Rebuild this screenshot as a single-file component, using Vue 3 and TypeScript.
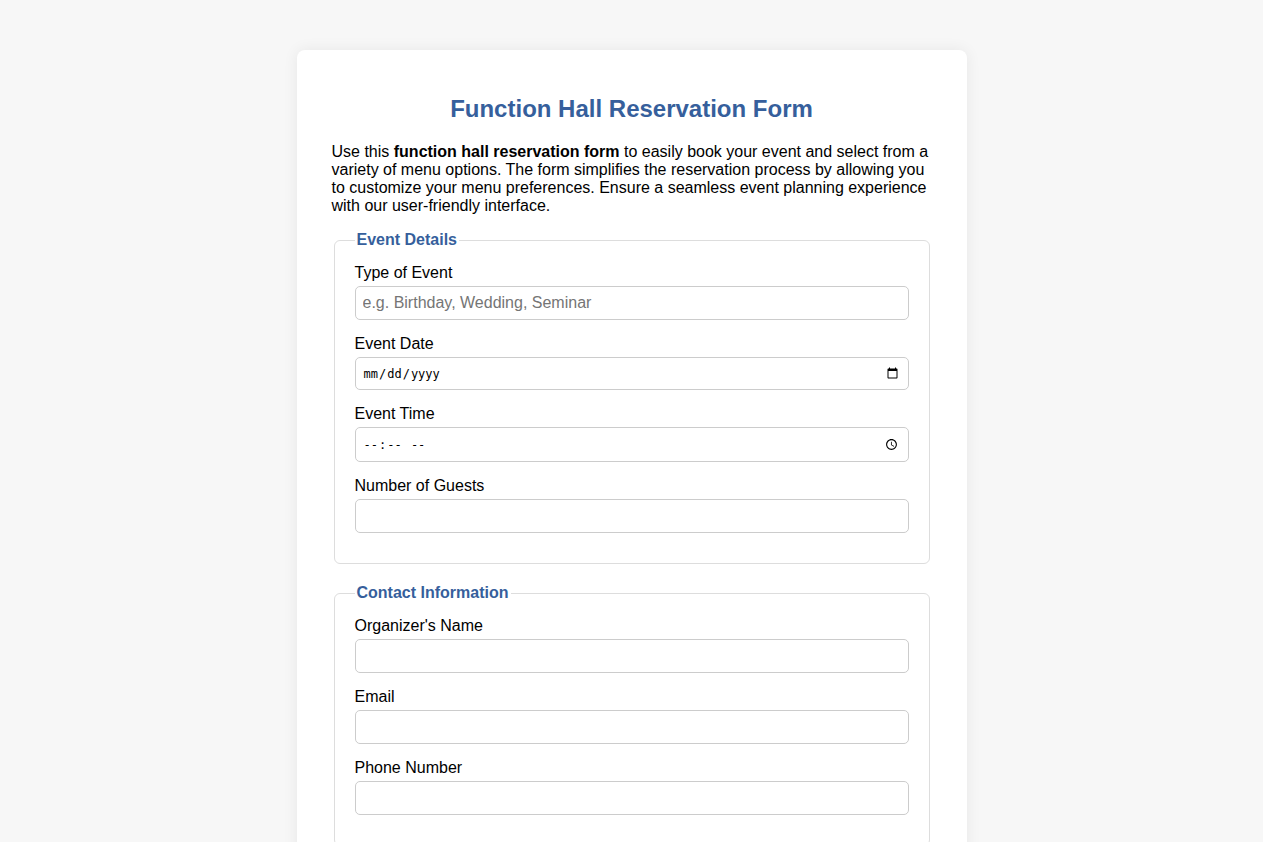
<script setup lang="ts">
import { ref } from 'vue'

interface Field {
  id: string
  label: string
  type: string
  placeholder?: string
}

interface Section {
  legend: string
  fields: Field[]
}

const sections: Section[] = [
  {
    legend: 'Event Details',
    fields: [
      { id: 'event-type', label: 'Type of Event', type: 'text', placeholder: 'e.g. Birthday, Wedding, Seminar' },
      { id: 'event-date', label: 'Event Date', type: 'date' },
      { id: 'event-time', label: 'Event Time', type: 'time' },
      { id: 'guests', label: 'Number of Guests', type: 'number' },
    ],
  },
  {
    legend: 'Contact Information',
    fields: [
      { id: 'organizer', label: "Organizer's Name", type: 'text' },
      { id: 'email', label: 'Email', type: 'email' },
      { id: 'phone', label: 'Phone Number', type: 'tel' },
    ],
  },
]

const values = ref<Record<string, string>>({})
</script>

<template>
  <main class="page">
    <form class="card" @submit.prevent>
      <h1 class="title">Function Hall Reservation Form</h1>
      <p class="intro">
        Use this <strong>function hall reservation form</strong> to easily book your event and select
        from a variety of menu options. The form simplifies the reservation process by allowing you to
        customize your menu preferences. Ensure a seamless event planning experience with our
        user-friendly interface.
      </p>
      <fieldset v-for="section in sections" :key="section.legend" class="section">
        <legend class="legend">{{ section.legend }}</legend>
        <div v-for="field in section.fields" :key="field.id" class="field">
          <label class="label" :for="field.id">{{ field.label }}</label>
          <input
            :id="field.id"
            v-model="values[field.id]"
            class="input"
            :class="field.type"
            :type="field.type"
            :placeholder="field.placeholder"
          />
        </div>
      </fieldset>
    </form>
  </main>
</template>

<style>
body {
  margin: 0;
  background: #f7f7f7;
}
</style>

<style scoped>
.page {
  padding: 50px 20px;
  font-family: "Liberation Sans", Arial, sans-serif;
  font-size: 16px;
  line-height: 18px;
  color: #000;
}

.card {
  box-sizing: border-box;
  max-width: 670px;
  margin: 0 auto;
  padding: 45px 35px 35px;
  background: #fff;
  border-radius: 8px;
  box-shadow: 0 0 15px rgba(0, 0, 0, 0.07);
}

.title {
  margin: 0 0 20px;
  font-size: 24px;
  line-height: 28px;
  text-align: center;
  color: #365f9c;
}

.intro {
  margin: 0 0 16px;
}

.section {
  min-width: 0;
  margin: 0 2px 20px;
  padding: 15px 20px 15px;
  border: 1px solid #ddd;
  border-radius: 6px;
}

.legend {
  padding: 0 2px;
  font-weight: bold;
  color: #365f9c;
}

.field {
  margin-bottom: 15px;
}

.label {
  display: block;
  margin-bottom: 4px;
}

.input {
  display: block;
  box-sizing: border-box;
  width: 100%;
  height: 34px;
  padding: 7px;
  border: 1px solid #ccc;
  border-radius: 5px;
  background: #fff;
  color: #000;
  font-family: inherit;
  font-size: 16px;
}

.input::placeholder {
  color: #757575;
}

.date,
.time {
  font-family: "DejaVu Sans Mono", monospace;
  font-size: 12px;
}

.date::-webkit-calendar-picker-indicator,
.time::-webkit-calendar-picker-indicator {
  width: 13px;
  height: 13px;
}

.date {
  height: 33px;
}

.time {
  height: 35px;
}
</style>
